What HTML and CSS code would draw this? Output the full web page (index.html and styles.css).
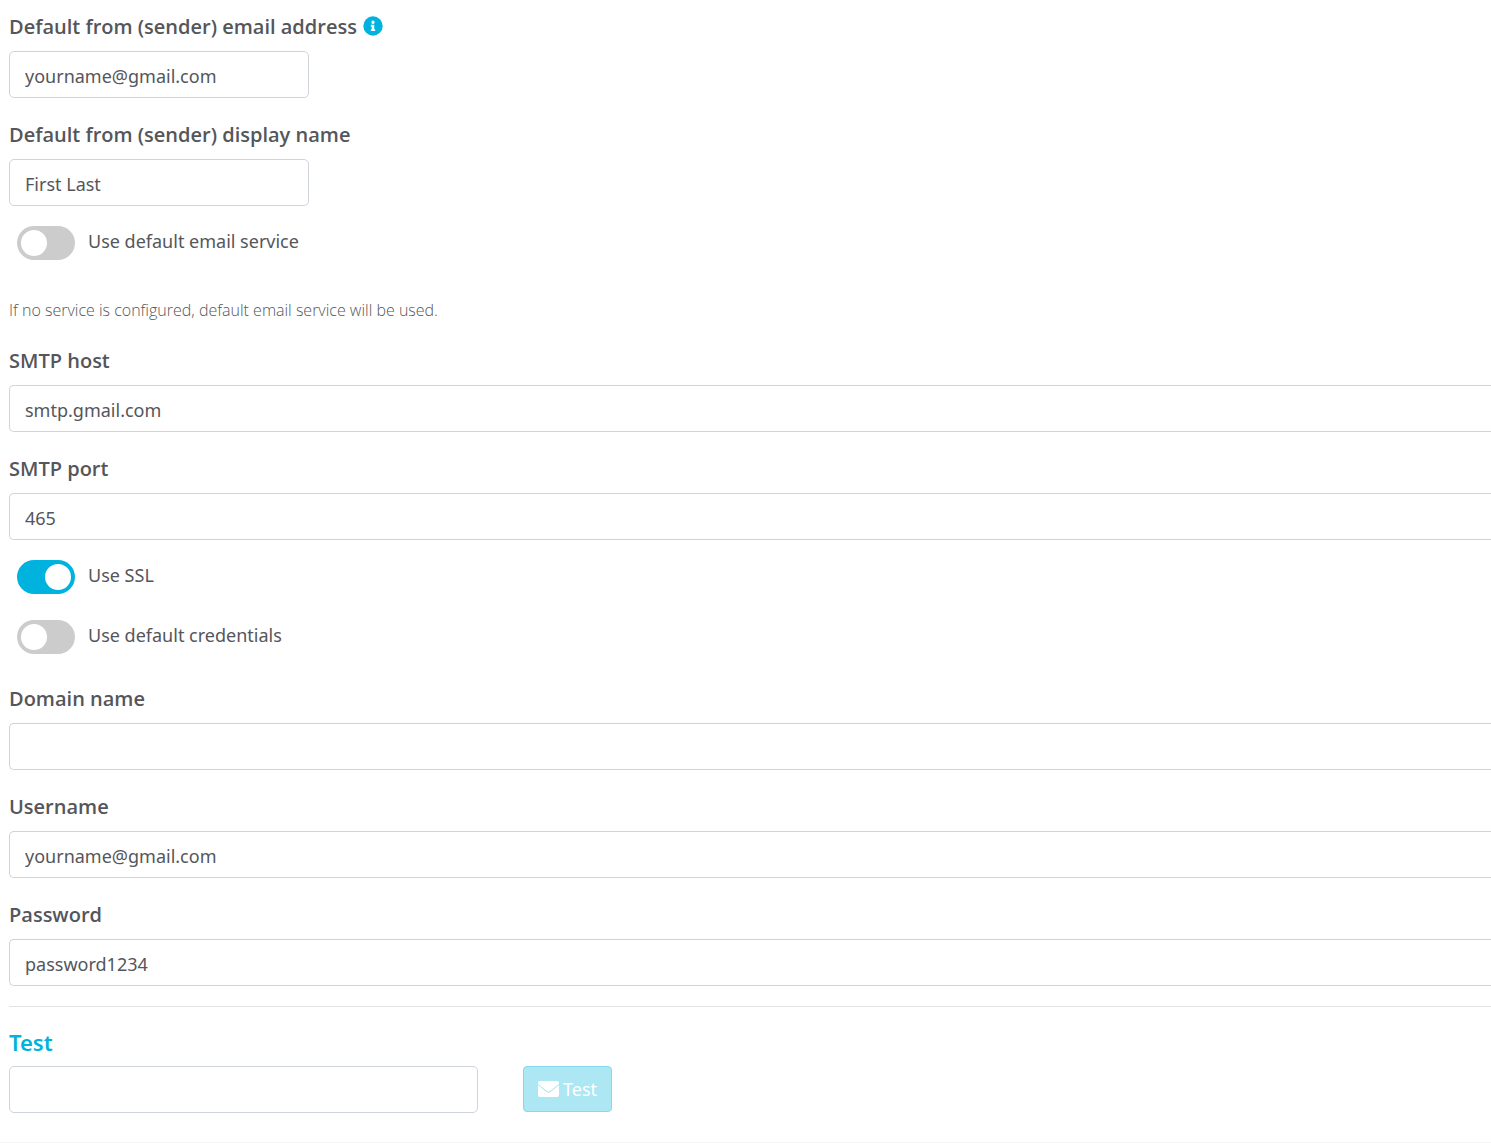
FILE: index.html
```html
<!DOCTYPE html>
<html lang="en">
<head>
    <meta charset="UTF-8">
    <meta name="viewport" content="width=device-width, initial-scale=1.0">
    <title>Email settings</title>
    <link rel="stylesheet" href="styles.css">
</head>
<body>
    <form class="settings">
        <div class="field">
            <div class="label-row">
                <label for="fromEmail">Default from (sender) email address</label>
                <svg class="info-icon" viewBox="0 0 512 512" aria-hidden="true">
                    <circle cx="256" cy="256" r="248" fill="#00b2de"/>
                    <path fill="#fff" d="M256 118a42 42 0 1 1 0 84 42 42 0 0 1 0-84zm56 254c0 7-5 12-12 12h-88c-7 0-12-5-12-12v-24c0-7 5-12 12-12h12v-64h-12c-7 0-12-5-12-12v-24c0-7 5-12 12-12h64c7 0 12 5 12 12v100h12c7 0 12 5 12 12v24z"/>
                </svg>
            </div>
            <input type="text" id="fromEmail" class="input input-short" value="yourname@gmail.com">
        </div>
        <div class="field">
            <label for="fromName">Default from (sender) display name</label>
            <input type="text" id="fromName" class="input input-short" value="First Last">
        </div>

        <div class="toggles">
            <label class="toggle">
                <input type="checkbox" class="switch">
                <span>Use default email service</span>
            </label>
        </div>
        <p class="hint">If no service is configured, default email service will be used.</p>

        <div class="field">
            <label for="smtpHost">SMTP host</label>
            <input type="text" id="smtpHost" class="input input-wide" value="smtp.gmail.com">
        </div>
        <div class="field">
            <label for="smtpPort">SMTP port</label>
            <input type="text" id="smtpPort" class="input input-wide" value="465">
        </div>

        <div class="toggles">
            <label class="toggle">
                <input type="checkbox" class="switch" checked>
                <span>Use SSL</span>
            </label>
            <label class="toggle">
                <input type="checkbox" class="switch">
                <span>Use default credentials</span>
            </label>
        </div>

        <div class="field">
            <label for="domain">Domain name</label>
            <input type="text" id="domain" class="input input-wide">
        </div>
        <div class="field">
            <label for="username">Username</label>
            <input type="text" id="username" class="input input-wide" value="yourname@gmail.com">
        </div>
        <div class="field">
            <label for="password">Password</label>
            <input type="text" id="password" class="input input-wide" value="password1234">
        </div>

        <hr class="divider">

        <h2 class="test-title">Test</h2>
        <div class="test-row">
            <input type="text" class="input input-test" aria-label="Test email address">
            <button type="button" class="btn" disabled>
                <svg class="mail-icon" viewBox="0 0 21 16" aria-hidden="true">
                    <path fill="#fff" d="M2 0h17a2 2 0 0 1 2 2v1l-9 7q-1.500 1-3 0L0 3V2a2 2 0 0 1 2-2z"/>
                    <path fill="#fff" d="M0 4l8.500 7q2 1.300 4 0L21 4v10a2 2 0 0 1-2 2H2a2 2 0 0 1-2-2z"/>
                </svg>
                <span>Test</span>
            </button>
        </div>
    </form>
</body>
</html>
```

FILE: styles.css
```css
* {
    box-sizing: border-box;
}
body {
    margin: 0;
    background-color: #fff;
    color: #54565b;
    font-family: "Segoe UI", "Noto Sans", "Open Sans", sans-serif;
    font-size: 18px;
}
.settings {
    padding: 12px 0 29px 9px;
    border-bottom: 1px solid #f5f5f5;
}
.field {
    margin-bottom: 22px;
}
.field label {
    display: block;
    margin-bottom: 9px;
    font-family: "Segoe UI", "Open Sans", sans-serif;
    font-size: 20px;
    font-weight: 600;
    line-height: 30px;
}
.label-row {
    display: flex;
    gap: 6px;
}
.info-icon {
    width: 20px;
    height: 20px;
    margin-top: 4px;
}
.input {
    display: block;
    width: 100%;
    height: 47px;
    padding: 2px 15px 0;
    border: 1px solid #ced4da;
    border-radius: 5px;
    background-color: #fff;
    color: #54565b;
    font-family: inherit;
    font-size: 18px;
}
.input-short {
    max-width: 300px;
}
/* full width inputs run to the edge of the panel */
.input-wide {
    border-right: none;
    border-radius: 5px 0 0 5px;
}
.toggles {
    display: flex;
    flex-direction: column;
    align-items: flex-start;
    gap: 26px;
    margin: -2px 0 30px 8px;
}
.toggle {
    display: flex;
    gap: 13px;
    line-height: 30px;
    cursor: pointer;
}
.switch {
    appearance: none;
    display: flex;
    align-items: center;
    width: 58px;
    height: 34px;
    margin: 0;
    padding: 0 4px;
    border-radius: 17px;
    background-color: #ccc;
    cursor: pointer;
}
.switch::before {
    content: "";
    width: 26px;
    height: 26px;
    border-radius: 50%;
    background-color: #fff;
}
.switch:checked {
    justify-content: flex-end;
    background-color: #00b2de;
}
.hint {
    margin: 38px 0 24px;
    font-family: "Segoe UI", "Open Sans", sans-serif;
    font-size: 16px;
    font-weight: 300;
    line-height: 24px;
}
.divider {
    height: 1px;
    margin: -2px 0 19px;
    border: none;
    background-color: #e3e4e6;
}
.test-title {
    margin: 0 0 8px;
    color: #00b2de;
    font-size: 22px;
    font-weight: 600;
    line-height: 32px;
}
.test-row {
    display: flex;
    gap: 45px;
}
.input-test {
    max-width: 469px;
}
.btn {
    display: flex;
    align-items: center;
    gap: 4px;
    height: 46px;
    padding: 0 14px;
    border: 1px solid #85d9ee;
    border-radius: 4px;
    background-color: #ace7f3;
    color: #fff;
    font-family: inherit;
    font-size: 18px;
}
.mail-icon {
    width: 21px;
    height: 16px;
}
```
